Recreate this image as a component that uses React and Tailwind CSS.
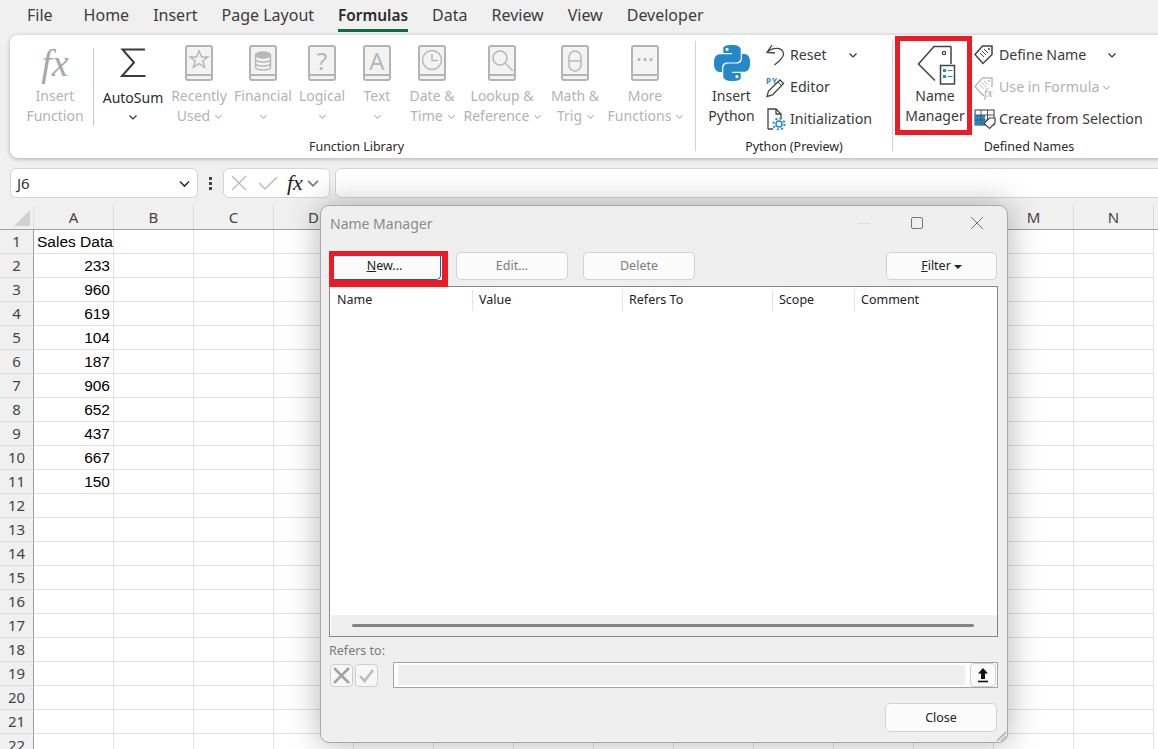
import React from "react";
import { SiPython } from "react-icons/si";

const tabs = ["Home", "Insert", "Page Layout", "Formulas", "Data", "Review", "View", "Developer"];
const columns = "ABCDEFGHIJKLMN".split("");
// E to L sit behind the dialog
const behindDialog = "EFGHIJKL";
const values = { 1: "Sales Data", 2: "233", 3: "960", 4: "619", 5: "104", 6: "187", 7: "906", 8: "652", 9: "437", 10: "667", 11: "150" };
const rows = Array.from({ length: 22 }, (_, i) => i + 1);

function Chevron({ color = "#444", size = 10, className = "" }) {
  return (
    <svg width={size} height={size} viewBox="0 0 10 10" className={`shrink-0 ${className}`}>
      <path d="M1.5 3.5 5 7l3.5-3.5" fill="none" stroke={color} strokeWidth="1.2" />
    </svg>
  );
}

function Book({ children, letter }) {
  return (
    <div className="relative w-[28px] h-[36px]">
      <svg width="28" height="36" viewBox="0 0 28 36">
        <rect x="1" y="1" width="26" height="34" rx="2" fill="#f3f3f3" stroke="#b4b4b4" strokeWidth="2" />
        <path d="M1 30h26" stroke="#b4b4b4" strokeWidth="2" />
        <g fill="none" stroke="#b8b8b8" strokeWidth="1.5">{children}</g>
      </svg>
      {letter && (
        <span className="absolute left-[2px] right-[2px] top-[3px] h-[26px] flex items-center justify-center text-[24px] leading-[26px] text-[#b8b8b8]">{letter}</span>
      )}
    </div>
  );
}

const glyphs = {
  star: <path d="M14 6l2.6 6h6.2l-5 4 1.9 6.300-5.700-3.700-5.700 3.700 1.900-6.300-5-4h6.200z" />,
  db: (
    <>
      <ellipse cx="14" cy="10" rx="7.500" ry="3" fill="#b8b8b8" />
      <path d="M6.500 10v12c0 4 15 4 15 0V10M6.500 14c0 4 15 4 15 0M6.500 18c0 4 15 4 15 0" />
    </>
  ),
  clock: (
    <>
      <circle cx="14" cy="15" r="9.500" />
      <path d="M14 9v6.500h6" />
    </>
  ),
  search: (
    <>
      <circle cx="12" cy="13" r="7" />
      <path d="M17 18l8 8" />
    </>
  ),
  theta: (
    <>
      <rect x="8" y="6" width="12" height="20" rx="6" />
      <path d="M8 16h12" />
    </>
  ),
  dots: (
    <>
      <circle cx="8" cy="14.500" r="1.500" fill="#b0b0b0" stroke="none" />
      <circle cx="14" cy="14.500" r="1.500" fill="#b0b0b0" stroke="none" />
      <circle cx="20" cy="14.500" r="1.500" fill="#b0b0b0" stroke="none" />
    </>
  ),
};

const library = [
  { w: "w-[54px]", glyph: "star", l1: "Recently", l2: "Used", inline: true },
  { w: "w-[74px]", glyph: "db", l1: "Financial" },
  { w: "w-[44px]", letter: "?", l1: "Logical" },
  { w: "w-[66px]", letter: "A", l1: "Text" },
  { w: "w-[44px]", glyph: "clock", l1: "Date &", l2: "Time", inline: true },
  { w: "w-[96px]", glyph: "search", l1: "Lookup &", l2: "Reference", inline: true },
  { w: "w-[50px]", glyph: "theta", l1: "Math &", l2: "Trig", inline: true },
  { w: "w-[90px]", glyph: "dots", l1: "More", l2: "Functions", inline: true },
];

function LibraryButton({ item }) {
  return (
    <div className={`${item.w} shrink-0 flex flex-col items-center text-[#b3b3b3]`}>
      <div className="h-[36px]">
        <Book letter={item.letter}>{glyphs[item.glyph]}</Book>
      </div>
      <div className="mt-[5px] h-[20px] leading-[20px] whitespace-nowrap">{item.l1}</div>
      {item.inline ? (
        <div className="h-[20px] leading-[20px] whitespace-nowrap flex items-center gap-[4px] pl-[2px]">
          {item.l2}
          <Chevron color="#b3b3b3" size={9} />
        </div>
      ) : (
        <div className="h-[20px] flex items-center">
          <Chevron color="#b3b3b3" size={9} />
        </div>
      )}
    </div>
  );
}

function TagShape({ stroke, stripes }) {
  return (
    <>
      <path d="M1 10.500 8.500 2H18v8.500L9 19.500z" fill="#fff" stroke={stroke} strokeWidth="1.500" />
      <circle cx="15" cy="5" r="1" fill={stroke} />
      {stripes && <path d="M6 9l4 4M8 7l4 4M10 5l4 4" stroke={stroke} strokeWidth="1" />}
    </>
  );
}

function SmallRow({ icon, children, muted, after }) {
  return (
    <div className={`h-[32px] flex items-center whitespace-nowrap text-[14.2px] ${muted ? "text-[#b3b3b3]" : "text-[#3a3a3a]"}`}>
      <div className="w-[24px] h-[24px] flex items-center justify-start relative">{icon}</div>
      <div>{children}</div>
      {after}
    </div>
  );
}

function DialogButton({ children, muted, className = "" }) {
  return (
    <div className={`h-[28px] pt-[1px] rounded-[5px] border border-[#d2d2d2] bg-[#fbfbfb] flex items-center justify-center ${muted ? "text-[#7d7d7d]" : "text-[#222]"} ${className}`}>
      {children}
    </div>
  );
}

function HeaderCell({ w, children }) {
  return (
    <div className={`${w} h-[21px] flex items-center border-r border-[#e2e2e2]`}>{children}</div>
  );
}

export default function App() {
  return (
    <div className="relative w-[1158px] h-[749px] overflow-hidden bg-[#f0f0f0] font-['Noto_Sans',sans-serif] text-[14px] flex flex-col">
      {/* tabs */}
      <div className="h-[35px] shrink-0 flex pl-[27px] text-[16px] text-[#3c3c3c]">
        <div className="h-[32px] leading-[31px] mr-[31px]">File</div>
        <div className="flex gap-[24px]">
          {tabs.map((t) =>
            t === "Formulas" ? (
              <div key={t} className="h-[32px] leading-[31px] text-[15.4px] font-semibold text-[#2b2b2b] border-b-[3px] border-[#106b3f]">{t}</div>
            ) : (
              <div key={t} className="h-[32px] leading-[31px]">{t}</div>
            )
          )}
        </div>
      </div>

      {/* ribbon */}
      <div className="h-[123px] shrink-0 ml-[10px] w-[1160px] rounded-[8px] bg-white shadow-[0_1px_4px_rgba(0,0,0,0.28)] flex">
        <div className="w-[685px] shrink-0 flex flex-col pl-[7px]">
          <div className="flex h-[100px] pt-[10px]">
            <div className="w-[76px] shrink-0 flex flex-col items-center text-[#b3b3b3]">
              <div className="h-[36px] leading-[36px] text-[38px] italic text-[#a8a8a8] font-['Liberation_Serif',serif]">fx</div>
              <div className="mt-[5px] h-[20px] leading-[20px]">Insert</div>
              <div className="h-[20px] leading-[20px]">Function</div>
            </div>
            <div className="w-px h-[78px] mt-[3px] shrink-0 bg-[#c8c8c8]" />
            <div className="w-[78px] shrink-0 flex flex-col items-center text-[#2b2b2b]">
              <svg width="28" height="32" viewBox="0 0 28 32" className="mt-[2px] mb-[2px]">
                <path d="M26 2.500H3.500L15 15.500 3 29h23.500" fill="none" stroke="#3a3a3a" strokeWidth="2" />
              </svg>
              <div className="mt-[7px] h-[20px] leading-[20px] whitespace-nowrap">AutoSum</div>
              <div className="h-[18px] flex items-center">
                <Chevron color="#333" />
              </div>
            </div>
            {library.map((item) => (
              <LibraryButton key={item.l1} item={item} />
            ))}
          </div>
          <div className="text-center text-[12.5px] text-[#2b2b2b] leading-[16px] mt-[4px] pl-[1px]">Function Library</div>
        </div>

        <div className="w-px h-[110px] mt-[6px] shrink-0 bg-[#d0d0d0]" />

        <div className="w-[196px] shrink-0 flex flex-col">
          <div className="flex h-[100px]">
            <div className="w-[70px] shrink-0 flex flex-col items-center text-[#3a3a3a] pt-[10px] pl-[1px]">
              <SiPython size={36} color="#2389c9" />
              <div className="mt-[5px] h-[20px] leading-[20px]">Insert</div>
              <div className="h-[20px] leading-[20px]">Python</div>
            </div>
            <div className="pt-[4px]">
              <SmallRow
                icon={
                  <svg width="22" height="24" viewBox="0 0 22 24">
                    <path d="M6 2 1 9.500l8 .500M1 9.500C7 3.500 17 4 17.500 11c.200 3.500-4 7-9 11" fill="none" stroke="#444" strokeWidth="1.300" />
                  </svg>
                }
                after={<Chevron className="ml-[21px]" color="#333" />}
              >
                Reset
              </SmallRow>
              <SmallRow
                icon={
                  <>
                    <span className="absolute left-0 top-[1px] text-[8px] leading-[9px] font-bold text-[#2389c9] tracking-[1px]">PY</span>
                    <svg width="24" height="24" viewBox="0 0 24 24">
                      <path d="M1 21.500l1.500-5.500L14 5l3.500 3.500L6.500 20z" fill="#fff" stroke="#444" strokeWidth="1.300" />
                      <path d="M12 7l3.500 3.500" stroke="#444" strokeWidth="1" />
                    </svg>
                  </>
                }
              >
                Editor
              </SmallRow>
              <SmallRow
                icon={
                  <svg width="22" height="24" viewBox="0 0 22 24">
                    <path d="M2 22V2h8l5 5v5M2 22h5M10 2v5h5" fill="none" stroke="#444" strokeWidth="1.300" />
                    <circle cx="13" cy="17" r="3" fill="none" stroke="#2389c9" strokeWidth="1.500" />
                    <circle cx="13" cy="17" r="5.500" fill="none" stroke="#2389c9" strokeWidth="2" strokeDasharray="2 2.300" />
                  </svg>
                }
              >
                Initialization
              </SmallRow>
            </div>
          </div>
          <div className="text-center text-[12.5px] text-[#2b2b2b] leading-[16px] mt-[4px]">Python (Preview)</div>
        </div>

        <div className="w-px h-[110px] mt-[6px] shrink-0 bg-[#d0d0d0]" />

        <div className="w-[270px] shrink-0 flex flex-col pl-[2px]">
          <div className="flex h-[100px]">
            <div className="w-[77px] h-[99px] shrink-0 mt-[1px] border-[5px] border-[#ed1c24] flex flex-col items-center text-[#3a3a3a] pt-[3px] pl-[3px]">
              <svg width="44" height="42" viewBox="0 0 44 42">
                <path d="M38 2.500H21L5.500 20 22 36.500M38 2.500V20" fill="none" stroke="#444" strokeWidth="1.500" />
                <circle cx="31" cy="9" r="1.700" fill="none" stroke="#444" strokeWidth="1.200" />
                <rect x="27.500" y="21.500" width="14" height="18.500" fill="#fff" stroke="#444" strokeWidth="1.500" />
                <rect x="30" y="25" width="3" height="3" fill="#2389c9" />
                <rect x="30" y="31" width="3" height="3" fill="#2389c9" />
                <path d="M34.500 26.500h5M34.500 32.500h5" stroke="#2389c9" strokeWidth="1.200" />
              </svg>
              <div className="h-[20px] leading-[20px]">Name</div>
              <div className="h-[20px] leading-[20px] whitespace-nowrap">Manager</div>
            </div>
            <div className="pt-[4px] pl-[2px]">
              <SmallRow
                icon={
                  <svg width="20" height="22" viewBox="0 0 20 22">
                    <TagShape stroke="#444" stripes />
                  </svg>
                }
                after={<Chevron className="ml-[21px]" color="#333" />}
              >
                <span className="ml-[1px]">Define Name</span>
              </SmallRow>
              <SmallRow
                muted
                icon={
                  <>
                    <svg width="20" height="22" viewBox="0 0 20 22">
                      <TagShape stroke="#bcbcbc" stripes />
                    </svg>
                    <span className="absolute left-[10px] bottom-0 text-[12px] leading-[12px] italic text-[#a8a8a8] bg-white font-['Liberation_Serif',serif]">fx</span>
                  </>
                }
                after={<Chevron className="ml-[3px]" color="#b3b3b3" size={9} />}
              >
                <span className="ml-[1px]">Use in Formula</span>
              </SmallRow>
              <SmallRow
                icon={
                  <svg width="22" height="22" viewBox="0 0 22 22">
                    <rect x="1" y="2" width="19" height="15" fill="#fff" stroke="#555" strokeWidth="1.200" />
                    <rect x="1" y="7" width="10" height="10" fill="#2389c9" />
                    <path d="M7 2v15M13.500 2v15M1 7h19M1 12h19" stroke="#555" strokeWidth="1" />
                    <path d="M10 15.500 15.500 10H21v5l-5.500 5.500z" fill="#fff" stroke="#444" strokeWidth="1.200" />
                  </svg>
                }
              >
                <span className="ml-[1px]">Create from Selection</span>
              </SmallRow>
            </div>
          </div>
          <div className="text-center text-[12.5px] text-[#2b2b2b] leading-[16px] mt-[4px]">Defined Names</div>
        </div>
      </div>

      {/* formula bar */}
      <div className="h-[30px] shrink-0 mt-[10px] flex pl-[10px]">
        <div className="w-[188px] h-[30px] shrink-0 rounded-[6px] border border-[#d4d4d4] bg-white flex items-center justify-between pl-[6px] pr-[6px] text-[#333] text-[15px]">
          J6
          <Chevron color="#333" size={13} />
        </div>
        <div className="w-[25px] shrink-0 flex flex-col items-center justify-center gap-[2px]">
          <span className="w-[3px] h-[3px] bg-[#444]" />
          <span className="w-[3px] h-[3px] bg-[#444]" />
          <span className="w-[3px] h-[3px] bg-[#444]" />
        </div>
        <div className="w-[107px] h-[30px] shrink-0 rounded-[6px] border border-[#d4d4d4] bg-white flex items-center pl-[7px]">
          <svg width="16" height="16" viewBox="0 0 16 16">
            <path d="M1 1l14 14M15 1 1 15" stroke="#b8b8b8" strokeWidth="1.300" fill="none" />
          </svg>
          <svg width="20" height="16" viewBox="0 0 20 16" className="ml-[11px]">
            <path d="M1 8l6 6L19 2" stroke="#b8b8b8" strokeWidth="1.300" fill="none" />
          </svg>
          <span className="ml-[9px] text-[22px] leading-[22px] italic text-[#222] font-['Liberation_Serif',serif]">fx</span>
          <Chevron className="ml-[3px]" color="#777" size={14} />
        </div>
        <div className="ml-[5px] w-[840px] h-[30px] shrink-0 rounded-[6px] border border-[#d4d4d4] bg-white" />
      </div>

      {/* sheet */}
      <div className="mt-[8px] flex-1 text-[#444]">
        <div className="flex h-[24px] border-b border-[#a0a0a0] text-[15px]">
          <div className="w-[34px] shrink-0 border-r border-[#e0e0e0] flex items-end justify-end pr-[3px] pb-[3px]">
            <div className="w-0 h-0 border-l-[16px] border-l-transparent border-b-[16px] border-b-[#d2d2d2]" />
          </div>
          {columns.map((c) => (
            <div key={c} className="w-[80px] shrink-0 border-r border-[#dcdcdc] flex items-center justify-center">
              {behindDialog.includes(c) ? "" : c}
            </div>
          ))}
        </div>
        {rows.map((r) => (
          <div key={r} className="flex h-[24px] bg-white">
            <div className="w-[34px] shrink-0 bg-[#f0f0f0] border-r border-[#a0a0a0] border-b border-b-[#dcdcdc] flex items-center justify-center text-[15px]">{r}</div>
            <div className={`w-[80px] shrink-0 pt-[1px] border-r border-b border-[#e1e1e1] flex items-center whitespace-nowrap text-black text-[15.5px] font-['Liberation_Sans',sans-serif] ${r === 1 ? "pl-[3px]" : "justify-end pr-[3px]"}`}>
              {values[r]}
            </div>
            {columns.slice(1).map((c) => (
              <div key={c} className="w-[80px] shrink-0 border-r border-b border-[#e1e1e1]" />
            ))}
          </div>
        ))}
      </div>

      {/* name manager dialog */}
      <div className="absolute left-[320px] top-[205px] w-[688px] h-[538px] rounded-[9px] border border-[#a9a9a9] bg-[#efefef] shadow-[0_0_32px_rgba(0,0,0,0.3)] text-[12.5px] flex flex-col px-[8px]">
        <div className="h-[36px] pb-[2px] shrink-0 flex items-center text-[14px] text-[#8a8a8a] pl-[1px]">
          Name Manager
          <div className="ml-auto flex items-center">
            <span className="w-[12px] h-px bg-[#dcdcdc]" />
            <span className="ml-[41px] w-[12px] h-[12px] border border-[#777] rounded-[2px]" />
            <svg width="14" height="14" viewBox="0 0 14 14" className="ml-[47px] mr-[15px]">
              <path d="M1 1l12 12M13 1 1 13" stroke="#777" strokeWidth="1" fill="none" />
            </svg>
          </div>
        </div>

        <div className="mt-[10px] flex pl-[1px] pr-[2px]">
          <div className="relative">
            <DialogButton className="w-[111px] border-b-[#0067c0] border-r-[#0067c0]">
              <span className="-ml-[2px]"><span className="underline">N</span>ew...</span>
            </DialogButton>
            <div className="absolute -left-[1px] -top-[1px] w-[119px] h-[36px] border-[5px] border-r-[6px] border-b-[7px] border-[#ed1c24]" />
          </div>
          <DialogButton muted className="w-[112px] ml-[15px]">Edit...</DialogButton>
          <DialogButton muted className="w-[112px] ml-[15px]">Delete</DialogButton>
          <DialogButton className="w-[111px] ml-auto">
            <span><span className="underline">F</span>ilter</span>
            <span className="ml-[3px] w-0 h-0 border-x-[4px] border-x-transparent border-t-[4px] border-t-[#222]" />
          </DialogButton>
        </div>

        <div className="mt-[6px] mr-[1px] h-[351px] shrink-0 border border-[#85858d] flex flex-col bg-white">
          <div className="flex text-[#222] pt-[3px] h-[26px]">
            <HeaderCell w="w-[143px] pl-[7px]">Name</HeaderCell>
            <HeaderCell w="w-[150px] pl-[6px]">Value</HeaderCell>
            <HeaderCell w="w-[150px] pl-[6px]">Refers To</HeaderCell>
            <HeaderCell w="w-[82px] pl-[6px]">Scope</HeaderCell>
            <div className="pl-[6px] h-[21px] flex items-center">Comment</div>
          </div>
          <div className="flex-1" />
          <div className="h-[21px] ml-[1px] bg-[#efefef] flex items-center pl-[21px] pr-[23px]">
            <div className="h-[3px] w-full rounded-full bg-[#858585]" />
          </div>
        </div>

        <div className="mt-[6px] h-[16px] leading-[16px] text-[#7a7a7a]">Refers to:</div>
        <div className="mt-[3px] flex items-center">
          <div className="w-[23px] h-[23px] ml-[1px] rounded-[4px] border border-[#cfcfcf] bg-[#f7f7f7] flex items-center justify-center">
            <svg width="19" height="19" viewBox="0 0 19 19">
              <path d="M2 2l15 15M17 2 2 17" stroke="#a3a3a3" strokeWidth="2.600" fill="none" />
            </svg>
          </div>
          <div className="w-[23px] h-[23px] ml-[2px] rounded-[4px] border border-[#cfcfcf] bg-[#f7f7f7] flex items-center justify-center">
            <svg width="17" height="17" viewBox="0 0 17 17">
              <path d="M2 9l4.500 5L15 3" stroke="#bcbcbc" strokeWidth="2.600" fill="none" />
            </svg>
          </div>
          <div className="ml-[15px] w-[605px] h-[26px] border border-[#a4a4a4] bg-white flex items-center pl-[4px] pr-[1px]">
            <div className="flex-1 h-[20px] bg-[#efefef]" />
            <div className="ml-[5px] w-[26px] h-[24px] rounded-[4px] border border-[#cfcfcf] bg-[#fbfbfb] flex items-center justify-center">
              <svg width="12" height="15" viewBox="0 0 12 15">
                <path d="M6 0 11 5.500H8V11H4V5.500H1z" fill="#111" />
                <path d="M1 13.500h10" stroke="#111" strokeWidth="1.600" />
              </svg>
            </div>
          </div>
        </div>
        <div className="mt-[15px] flex justify-end pr-[2px]">
          <DialogButton className="w-[112px] h-[29px] pt-[2px]">Close</DialogButton>
        </div>
        <svg width="13" height="13" viewBox="0 0 13 13" className="absolute right-0 bottom-0">
          <path d="M12 3 3 12M12 7l-5 5" stroke="#a8a8a8" strokeWidth="1.300" fill="none" />
        </svg>
      </div>
    </div>
  );
}
